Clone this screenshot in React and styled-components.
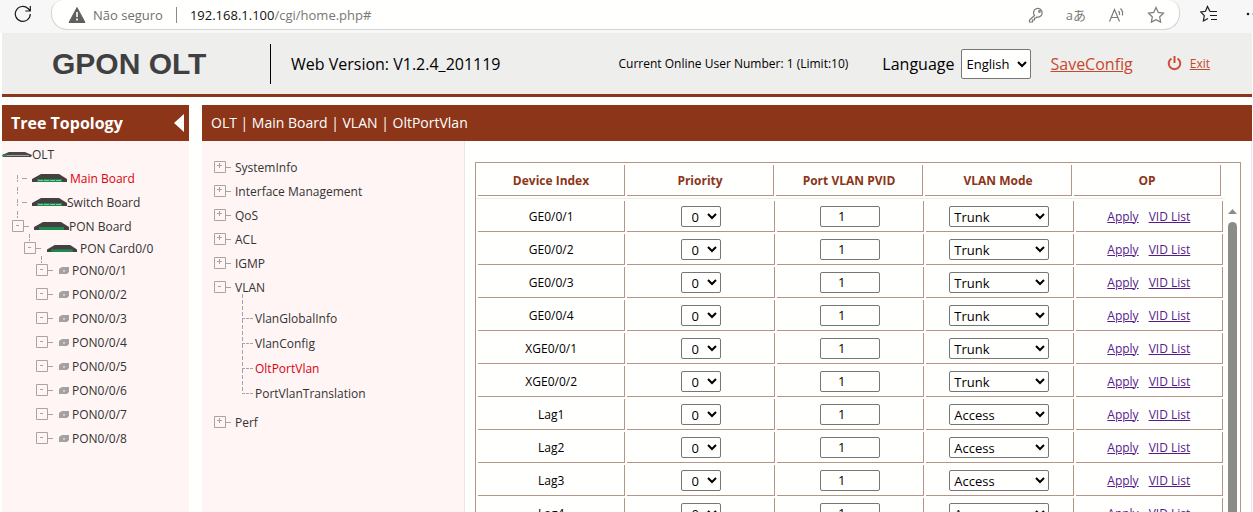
import { useState } from "react";
import { styled, createGlobalStyle } from "styled-components";

const boards = [
  { name: "OLT", kind: "olt" },
  { name: "Main Board", kind: "leaf", active: true },
  { name: "Switch Board", kind: "leaf" },
  { name: "PON Board", kind: "board" },
  { name: "PON Card0/0", kind: "card" },
  { name: "PON0/0/1", kind: "port", first: true },
  { name: "PON0/0/2", kind: "port" },
  { name: "PON0/0/3", kind: "port" },
  { name: "PON0/0/4", kind: "port" },
  { name: "PON0/0/5", kind: "port" },
  { name: "PON0/0/6", kind: "port" },
  { name: "PON0/0/7", kind: "port" },
  { name: "PON0/0/8", kind: "port" },
];

const menu = ["SystemInfo", "Interface Management", "QoS", "ACL", "IGMP"];
const vlanMenu = ["VlanGlobalInfo", "VlanConfig", "OltPortVlan", "PortVlanTranslation"];

const columns = ["Device Index", "Priority", "Port VLAN PVID", "VLAN Mode", "OP"];

const ports = [
  ["GE0/0/1", "Trunk"],
  ["GE0/0/2", "Trunk"],
  ["GE0/0/3", "Trunk"],
  ["GE0/0/4", "Trunk"],
  ["XGE0/0/1", "Trunk"],
  ["XGE0/0/2", "Trunk"],
  ["Lag1", "Access"],
  ["Lag2", "Access"],
  ["Lag3", "Access"],
  ["Lag4", "Access"],
];

// Tree lines and the [+] / [-] box
const Toggle = ({ open, stub }) => (
  <Lines width="18" height="13" viewBox="0 0 18 13" aria-hidden="true">
    <path d="M.5 .5h11v11H.5zM12 6.5h5" />
    <path d={open ? "M4 5.5h3" : "M3 4.5h5M5.5 2v5"} />
    {stub && <path d="M5.5 -8v4M5.5 -3v2" />}
  </Lines>
);

const LeafLines = () => (
  <Lines width="13" height="24" viewBox="0 0 13 24" aria-hidden="true">
    <path d="M1.5 9v4M1.5 14v2M1.5 21v4M1.5 26v2M6 12.5h5" />
  </Lines>
);

const BoardIcon = ({ width, height = 8, ports: hasPorts }) => (
  <svg
    width={width}
    height={height}
    viewBox="0 0 35 8"
    preserveAspectRatio="none"
    aria-hidden="true"
  >
    <path d="M9 0h18l8 5v3H0V5z" fill="#474043" />
    <path d="M5 5h25v3H5z" fill="#1d8a4d" />
    {hasPorts && <path d="M6 6.500h5m1 0h5m1 0h5m1 0h5" stroke="#6fd09a" fill="none" />}
  </svg>
);

const OltIcon = () => (
  <svg width="30" height="6" viewBox="0 0 30 6" aria-hidden="true">
    <path d="M7 1h16l7 3-1 2H1L0 4z" fill="#4b4648" />
    <path d="M5 4.500h22" stroke="#a5a3a4" />
    <path d="M1 4.500h4" stroke="#2f8f57" strokeWidth="2" />
  </svg>
);

const PortIcon = () => (
  <svg width="10" height="7" viewBox="0 0 10 7" aria-hidden="true">
    <path d="M3 0h7v5L8 7H0V2z" fill="#a3a1a1" />
    <path d="M4 3v2h2V3z" fill="#d0caca" />
  </svg>
);

const TreeNode = ({ name, kind, active, first }) => (
  <Node $kind={kind}>
    {kind === "olt" && <OltIcon />}
    {kind === "leaf" && (
      <>
        <LeafLines />
        <Slot $width={35} $left={3}>
          <BoardIcon width="35" ports />
        </Slot>
      </>
    )}
    {kind === "board" && (
      <>
        <Toggle open />
        <Slot $width={35} $left={4}>
          <BoardIcon width="35" />
        </Slot>
      </>
    )}
    {kind === "card" && (
      <>
        <Toggle open stub />
        <Slot $width={30} $left={5}>
          <BoardIcon width="30" height="7" />
        </Slot>
      </>
    )}
    {kind === "port" && (
      <>
        <Toggle open stub={first} />
        <Slot $width={10} $left={5}>
          <PortIcon />
        </Slot>
      </>
    )}
    <NodeLink href="#" $active={active} $space={active || kind === "port" || kind === "card"}>
      {name}
    </NodeLink>
  </Node>
);

const PortRow = ({ name, mode }) => {
  const [pvid, setPvid] = useState("1");
  return (
    <tr>
      <Cell>{name}</Cell>
      <Cell>
        <PrioritySelect aria-label={`${name} priority`} defaultValue="0">
          {[0, 1, 2, 3, 4, 5, 6, 7].map((n) => (
            <option key={n}>{n}</option>
          ))}
        </PrioritySelect>
      </Cell>
      <Cell>
        <PvidInput
          aria-label={`${name} PVID`}
          value={pvid}
          onChange={(e) => setPvid(e.target.value)}
        />
      </Cell>
      <Cell>
        <ModeSelect aria-label={`${name} VLAN mode`} defaultValue={mode}>
          <option>Access</option>
          <option>Trunk</option>
          <option>Hybrid</option>
        </ModeSelect>
      </Cell>
      <Cell>
        <Actions>
          <a href="#">Apply</a>
          <a href="#">VID List</a>
        </Actions>
      </Cell>
    </tr>
  );
};

const App = () => {
  return (
    <Page>
      <GlobalStyle />
      {/* Browser bar */}
      <BrowserBar>
        <IconButton aria-label="Refresh" $dark>
          <svg width="18" height="18" viewBox="0 0 18 18">
            <path d="M16.300 9A7.500 7.500 0 1 1 14 3.500L16 5.500M16.300 1v5h-5" />
          </svg>
        </IconButton>
        <AddressBar>
          <svg width="18" height="16" viewBox="0 0 18 16" aria-hidden="true">
            <path d="M9 0.500 17 15.500H1z" fill="#5f5f5f" stroke="#5f5f5f" strokeLinejoin="round" />
            <path d="M9 5v5M9 11.500v2" stroke="#fff" strokeWidth="1.600" />
          </svg>
          <Insecure>Não seguro</Insecure>
          <Url>
            <b>192.168.1.100</b>/cgi/home.php#
          </Url>
          <BarIcons>
            <IconButton aria-label="Passwords">
              <svg width="16" height="16" viewBox="0 0 16 16">
                <path d="M6.500 8.500 1.500 13v2h3v-2h2v-2h1.500l1-1a4.300 4.300 0 1 0-2.500-1.500z" />
                <circle cx="11.500" cy="4.500" r=".8" />
              </svg>
            </IconButton>
            <Translate aria-label="Translate">aあ</Translate>
            <IconButton aria-label="Read aloud">
              <svg width="17" height="16" viewBox="0 0 17 16">
                <path d="M1.500 14.500 6.500 2.500l5 12M3.200 10.500h6.600M10.500 4q1.500 1.500 1 4M12.500 1.500q3 3 1.800 7" />
              </svg>
            </IconButton>
            <IconButton aria-label="Add to favorites">
              <svg width="18" height="18" viewBox="0 0 18 18">
                <path d="m9 1.500 2.300 4.900 5.200.7-3.800 3.700.9 5.300L9 13.600l-4.600 2.500.9-5.300L1.500 7.100l5.200-.7z" />
              </svg>
            </IconButton>
          </BarIcons>
        </AddressBar>
        <IconButton aria-label="Favorites" $dark>
          <svg width="18" height="18" viewBox="0 0 18 18">
            <path d="M10 6.500 7.500 1.500 5.500 6.300l-4.700.7 3.500 3.700-.9 5.300L8 13.500M10 6.500h7M10 10.500h7M11 14.500h6" />
          </svg>
        </IconButton>
        <More aria-label="Settings and more">
          <svg width="16" height="4" viewBox="0 0 16 4">
            <circle cx="2" cy="2" r="1.300" />
            <circle cx="8" cy="2" r="1.300" />
            <circle cx="14" cy="2" r="1.300" />
          </svg>
        </More>
      </BrowserBar>

      {/* Header */}
      <Header>
        <Brand>GPON OLT</Brand>
        <Version>Web Version: V1.2.4_201119</Version>
        <Users>Current Online User Number: 1 (Limit:10)</Users>
        <Language>
          Language
          <LanguageSelect defaultValue="English">
            <option>English</option>
            <option>Chinese</option>
          </LanguageSelect>
        </Language>
        <SaveLink href="#">SaveConfig</SaveLink>
        <svg width="15" height="15" viewBox="0 0 15 15" aria-hidden="true">
          <path
            d="M4.500 2.500a5.800 5.800 0 1 0 6 0M7.500 0v7"
            fill="none"
            stroke="#d04a35"
            strokeWidth="2"
          />
        </svg>
        <ExitLink href="#">Exit</ExitLink>
      </Header>

      <Body>
        {/* Tree */}
        <Sidebar>
          <PanelTitle>
            Tree Topology
            <CollapseButton aria-label="Collapse tree">
              <svg width="10" height="18" viewBox="0 0 10 18">
                <path d="M10 0v18L0 9z" fill="#fff" />
              </svg>
            </CollapseButton>
          </PanelTitle>
          <Tree>
            {boards.map((b) => (
              <TreeNode key={b.name} {...b} />
            ))}
          </Tree>
        </Sidebar>

        <Main>
          <Crumbs>OLT | Main Board | VLAN | OltPortVlan</Crumbs>
          <Columns>
            <Menu>
              {menu.map((m) => (
                <MenuItem key={m}>
                  <Toggle />
                  <MenuLink href="#">{m}</MenuLink>
                </MenuItem>
              ))}
              <MenuItem>
                <Toggle open />
                <MenuLink href="#">VLAN</MenuLink>
              </MenuItem>
              <SubMenu>
                {vlanMenu.map((m) => (
                  <SubItem key={m}>
                    <Lines width="13" height="25" viewBox="0 0 13 25" aria-hidden="true">
                      <path d="M.5 -12V13" strokeDasharray="4 2" />
                      <path d="M0 12.500h12" strokeDasharray="3 1" />
                    </Lines>
                    <NodeLink href="#" $active={m === "OltPortVlan"}>
                      {m}
                    </NodeLink>
                  </SubItem>
                ))}
              </SubMenu>
              <MenuItem>
                <Toggle />
                <MenuLink href="#">Perf</MenuLink>
              </MenuItem>
            </Menu>

            {/* Port table */}
            <Content>
              <Frame>
                <HeadWrap>
                  <Table>
                    <thead>
                      <tr>
                        {columns.map((c) => (
                          <HeadCell key={c}>{c}</HeadCell>
                        ))}
                      </tr>
                    </thead>
                  </Table>
                </HeadWrap>
                <Scroller>
                  <Table>
                    <tbody>
                      {ports.map(([name, mode]) => (
                        <PortRow key={name} name={name} mode={mode} />
                      ))}
                    </tbody>
                  </Table>
                  <ScrollBar>
                    <svg width="9" height="5" viewBox="0 0 9 5" aria-hidden="true">
                      <path d="M4.500 0 9 5H0z" fill="#8b8b88" />
                    </svg>
                    <Thumb />
                  </ScrollBar>
                </Scroller>
              </Frame>
            </Content>
          </Columns>
        </Main>
      </Body>
    </Page>
  );
};

const GlobalStyle = createGlobalStyle`
  * {
    box-sizing: border-box;
  }
  body {
    margin: 0;
    overflow: hidden;
    background: #fffffe;
    color: #000;
    font-family: "Open Sans", "Noto Sans", sans-serif;
    font-size: 12px;
  }
  button, input, select {
    font-family: inherit;
  }
  svg {
    flex: none;
    display: block;
  }
`;

const Page = styled.div`
  height: 100vh;
  display: flex;
  flex-direction: column;
  overflow: hidden;
`;

const BrowserBar = styled.div`
  display: flex;
  align-items: flex-start;
  flex: none;
  height: 33px;
  padding-left: 14px;
  background: #f7f7f7;
  overflow: hidden;
`;

const IconButton = styled.button`
  display: flex;
  align-items: center;
  height: 28px;
  padding: 0;
  border: 0;
  background: none;

  svg {
    fill: none;
    stroke: ${(props) => (props.$dark ? "#1b1b1b" : "#7a7a7a")};
    stroke-width: 1.2;
  }
`;

const Translate = styled(IconButton)`
  color: #7a7a7a;
  font-family: "Open Sans", "Noto Sans CJK JP", sans-serif;
  font-size: 13px;
`;

const More = styled(IconButton)`
  margin-left: 28px;
  margin-right: -9px;

  svg {
    fill: #1b1b1b;
    stroke: none;
  }
`;

const AddressBar = styled.div`
  flex: 1;
  display: flex;
  align-items: center;
  height: 30px;
  margin: 0 20px 0 19px;
  padding: 0 14px 0 16px;
  background: #fffffe;
  border: 1px solid #d3d3d1;
  border-top: 0;
  border-radius: 12px 12px 16px 16px;
`;

const Insecure = styled.span`
  padding: 0 13px 0 7px;
  border-right: 1px solid #8a8a8a;
  color: #707070;
  font-size: 13px;
  line-height: 16px;
`;

const Url = styled.span`
  padding-left: 13px;
  color: #777;
  font-size: 13px;

  b {
    color: #111;
    font-weight: normal;
  }
`;

const BarIcons = styled.div`
  display: flex;
  gap: 22px;
  margin-left: auto;
`;

const Header = styled.header`
  display: flex;
  align-items: center;
  flex: none;
  height: 64px;
  margin: 0 1px 0 2px;
  padding: 0 42px 0 50px;
  background: #eeeeed;
  border-bottom: 3px solid #8c3519;
`;

const Brand = styled.h1`
  width: 219px;
  margin: 0;
  border-right: 1px solid #000;
  color: #404040;
  font: bold 30px/40px "Liberation Sans", Arial, sans-serif;
`;

const Version = styled.span`
  padding-left: 20px;
  font-size: 16px;
`;

const Users = styled.span`
  margin-left: auto;
`;

const Language = styled.label`
  display: flex;
  align-items: center;
  gap: 7px;
  margin-left: 34px;
  font-size: 16px;
`;

const Select = styled.select`
  height: 21px;
  padding: 0;
  border: 1px solid #767676;
  border-radius: 2px;
  background-color: #fffffe;
  color: #000;
  font-size: 13px;
`;

const LanguageSelect = styled(Select)`
  width: 70px;
  height: 30px;
`;

const SaveLink = styled.a`
  margin: 0 34px 0 19px;
  color: #c8482f;
  font-size: 16px;
`;

const ExitLink = styled.a`
  margin-left: 8px;
  color: #c8482f;
`;

const Body = styled.div`
  flex: 1;
  display: flex;
  gap: 13px;
  min-height: 0;
  margin: 8px 1px 0 2px;
`;

const Sidebar = styled.aside`
  flex: none;
  width: 187px;
  background: #fff5f4;
`;

const PanelTitle = styled.div`
  display: flex;
  align-items: center;
  justify-content: space-between;
  height: 36px;
  padding: 0 5px 0 9px;
  background: #8c3519;
  color: #fff;
  font-size: 16px;
  font-weight: bold;
`;

const CollapseButton = styled.button`
  padding: 0;
  border: 0;
  background: none;
`;

const Tree = styled.ul`
  margin: 0;
  padding: 1px 0 0;
  list-style: none;
`;

const indents = { olt: 0, leaf: 14, board: 10, card: 22, port: 34 };

const Node = styled.li`
  display: flex;
  align-items: center;
  height: ${(props) => (props.$kind === "card" ? 20 : 24)}px;
  padding-left: ${(props) => indents[props.$kind]}px;
`;

const Slot = styled.span`
  width: ${(props) => props.$width}px;
  margin-left: ${(props) => props.$left}px;
`;

const NodeLink = styled.a`
  padding-left: ${(props) => (props.$space ? 3 : 0)}px;
  color: ${(props) => (props.$active ? "#d9000f" : "#333")};
  text-decoration: none;
  white-space: nowrap;
`;

const Lines = styled.svg`
  overflow: visible;
  fill: none;
  stroke: #a9a3a3;
`;

const Main = styled.main`
  flex: 1;
  display: flex;
  flex-direction: column;
  min-width: 0;
`;

const Crumbs = styled.div`
  flex: none;
  height: 36px;
  padding-left: 9px;
  background: #8c3519;
  color: #fff;
  font-size: 14px;
  line-height: 36px;
`;

const Columns = styled.div`
  flex: 1;
  display: flex;
  min-height: 0;
`;

const Menu = styled.ul`
  flex: none;
  width: 263px;
  margin: 0;
  padding: 14px 0 0;
  border-right: 1px solid #e8e6e6;
  background: #fff5f4;
  list-style: none;
`;

const MenuItem = styled.li`
  display: flex;
  align-items: center;
  height: 24px;
  padding-left: 12px;
`;

const MenuLink = styled.a`
  padding-left: 3px;
  color: #333;
  text-decoration: none;
`;

const SubMenu = styled.ul`
  margin: 0;
  padding: 7px 0 4px 40px;
  list-style: none;
`;

const SubItem = styled.li`
  display: flex;
  align-items: center;
  height: 25px;
`;

const Content = styled.section`
  flex: 1;
  display: flex;
  min-width: 0;
  padding: 21px 10px 0;
  border-right: 1px solid #e8e6e6;
`;

const Frame = styled.div`
  flex: 1;
  display: flex;
  flex-direction: column;
  min-width: 0;
  border: 1px solid #b5958a;
  border-bottom: 0;
`;

const HeadWrap = styled.div`
  margin-right: 15px;
  padding-right: 2px;
  border-bottom: 1px solid #ececec;
`;

const Table = styled.table`
  width: 100%;
  table-layout: fixed;
  border-spacing: 2px;
`;

const HeadCell = styled.th`
  height: 31px;
  padding: 0;
  border-right: 1px solid #b5958a;
  border-bottom: 1px solid #b5958a;
  color: #8c3519;
`;

const Cell = styled.td`
  height: 31px;
  padding: 0;
  border-right: 1px solid #b5958a;
  border-bottom: 1px solid #b5958a;
  text-align: center;
`;

const Scroller = styled.div`
  flex: 1;
  display: flex;
  align-items: flex-start;
  min-height: 0;
  overflow: hidden;
`;

const ScrollBar = styled.div`
  flex: none;
  align-self: stretch;
  display: flex;
  flex-direction: column;
  align-items: center;
  gap: 8px;
  width: 15px;
  padding-top: 10px;
`;

const Thumb = styled.div`
  flex: 1;
  width: 9px;
  border-radius: 5px 5px 0 0;
  background: #8b8b88;
`;

const PrioritySelect = styled(Select)`
  width: 40px;
  padding-left: 6px;
`;

const ModeSelect = styled(Select)`
  width: 100px;
`;

const PvidInput = styled.input`
  width: 60px;
  height: 21px;
  padding: 0 17px;
  border: 1px solid #767676;
  border-radius: 2px;
  background: #fffffe;
  font-size: 13px;
`;

const Actions = styled.div`
  display: flex;
  justify-content: center;
  gap: 10px;

  a {
    color: #551a8b;
  }
`;

export default App;
